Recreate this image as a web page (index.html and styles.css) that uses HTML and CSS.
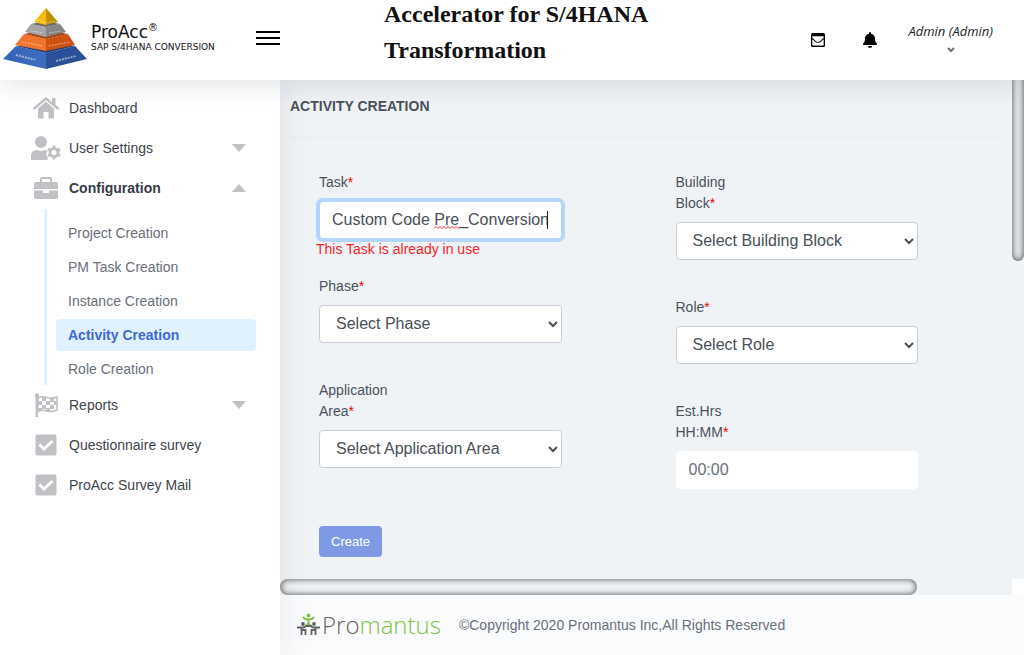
FILE: index.html
```html
<!DOCTYPE html>
<html lang="en">
<head>
<meta charset="utf-8">
<title>ProAcc - Activity Creation</title>
<link rel="stylesheet" href="styles.css">
</head>
<body>
<header class="topbar">
  <a class="brand" href="#">
    <svg class="brand-mark" width="86" height="64" viewBox="0 0 86 64" aria-hidden="true">
      <defs>
        <linearGradient id="blue" x1="0" x2="1"><stop offset="0" stop-color="#3563b5"/><stop offset="1" stop-color="#3e6dc0"/></linearGradient>
      </defs>
      <path d="M13 40L43 47V63L0 53z" fill="url(#blue)"/>
      <path d="M72 40L43 47V63L84 53z" fill="#2a5098"/>
      <path d="M13 40L43 34L72 40L43 47z" fill="#1f3e79"/>
      <path d="M21 28L43 33V45L12 39z" fill="#f0752a"/>
      <path d="M65 28L43 33V45L72 39z" fill="#cf5213"/>
      <path d="M21 28L43 24L65 28L43 33z" fill="#a64312"/>
      <path d="M28 18L43 21V31L22 26z" fill="#a5a5a5"/>
      <path d="M57 18L43 21V31L63 26z" fill="#858585"/>
      <path d="M28 18L43 15L57 18L43 21z" fill="#6c6c6c"/>
      <path d="M43 2V19L31 16z" fill="#f5bd0b"/>
      <path d="M43 2V19L55 16z" fill="#bd9005"/>
      <g stroke="#fff" stroke-opacity=".5" stroke-width="2" stroke-dasharray="2 1" fill="none">
        <path d="M13 49L33 54M53 55L73 50"/>
        <path d="M19 36L39 40M46 40L67 36" stroke-width="1"/>
        <path d="M28 25L40 27M46 27L58 25" stroke-width="1"/>
        <path d="M34 14L43 17L52 15" stroke-width="1"/>
      </g>
    </svg>
    <span class="brand-text">
      <span class="brand-name">ProAcc<sup>®</sup></span>
      <span class="brand-sub">SAP S/4HANA CONVERSION</span>
    </span>
  </a>
  <button class="icon-btn menu-btn" type="button" aria-label="Toggle menu">
    <svg width="24" height="16" viewBox="0 0 24 16"><path d="M0 1h24v2H0zM0 7h24v2H0zM0 13h24v2H0z"/></svg>
  </button>
  <h1 class="title">Accelerator for S/4HANA Transformation</h1>
  <div class="tools">
    <button class="icon-btn" type="button" aria-label="Messages">
      <svg width="14" height="14" viewBox="0 0 14 14"><rect width="14" height="14" rx="1.500"/><path d="M1.300 3.200h11.400v1.500L9 8.300Q7 9.700 5 8.300L1.300 4.700zM1.300 6.200L4.500 9Q7 10.700 9.500 9L12.700 6.200V12.500H1.300z" fill="#fff"/></svg>
    </button>
    <button class="icon-btn" type="button" aria-label="Notifications">
      <svg width="14" height="16" viewBox="0 0 448 512"><path d="M224 512c35 0 64-29 64-64H160c0 35 29 64 64 64zm215-150c-19-20-55-51-55-154 0-77-54-139-128-154V32a32 32 0 1 0-64 0v22C118 69 64 131 64 208c0 103-36 134-55 154-6 6-9 14-9 22 0 16 13 32 32 32h384c19 0 32-16 32-32 0-8-3-16-9-22z"/></svg>
    </button>
    <button class="user-btn" type="button">
      <span>Admin (Admin)</span>
      <svg width="8" height="6" viewBox="0 0 8 6"><path d="M1 1l3 3 3-3" fill="none" stroke="#69707a" stroke-width="2"/></svg>
    </button>
  </div>
</header>

<div class="shell">
  <nav class="sidebar">
    <a class="nav-item" href="#">
      <svg class="nav-icon" viewBox="0 0 28 28"><path d="M1.500 15L14 4.500 26.500 15" fill="none" stroke="#c0c1c4" stroke-width="2.400"/><path d="M20 4h3.500v8L20 9zM6 14.500l8-6.800 8 6.800V24.500h-5.500V18h-5v6.500H6z"/></svg>
      <span>Dashboard</span>
    </a>
    <a class="nav-item" href="#">
      <svg class="nav-icon wide" viewBox="0 0 30 28"><circle cx="10" cy="8" r="6"/><path d="M0 26v-3.500Q0 16 6 16q4 2 8 0 1.500 0 2.500 1l-1.500 3 2 4-1 2z"/><circle cx="23" cy="18.500" r="4" fill="none" stroke="#c0c1c4" stroke-width="3"/><path d="M23 11.500v2.500M23 23v2.500M17 15l2 1.200M27 20.800l2 1.200M17 22l2-1.200M27 16.200l2-1.200" stroke="#c0c1c4" stroke-width="2.800"/></svg>
      <span>User Settings</span>
      <svg class="caret" viewBox="0 0 14 8"><path d="M0 0h14L7 8z"/></svg>
    </a>
    <a class="nav-item open" href="#">
      <svg class="nav-icon" viewBox="0 0 28 28"><path d="M9 8V5q0-1 1-1h8q1 0 1 1v3" fill="none" stroke="#c0c1c4" stroke-width="2"/><path d="M4 8h20q2 0 2 2v5H2v-5q0-2 2-2zM2 16.500h9V19h6v-2.500h9V23q0 2-2 2H4q-2 0-2-2z"/></svg>
      <span>Configuration</span>
      <svg class="caret" viewBox="0 0 14 8"><path d="M0 8h14L7 0z"/></svg>
    </a>
    <div class="subnav">
      <a href="#">Project Creation</a>
      <a href="#">PM Task Creation</a>
      <a href="#">Instance Creation</a>
      <a class="active" href="#" aria-current="page">Activity Creation</a>
      <a href="#">Role Creation</a>
    </div>
    <a class="nav-item" href="#">
      <svg class="nav-icon" viewBox="0 0 28 28"><circle cx="5" cy="4.500" r="2.200"/><path d="M3.500 5H6v21H3.500z"/><path d="M6 7q4-2 8.500-.5T25 6v13q-5 2.500-10 1t-9 .5z" fill="none" stroke="#c0c1c4" stroke-width="1.500"/><path d="M10 6h4v4h-4zM18 7h4v4h-4zM6 10h4v4H6zM14 10h4v4h-4zM22 10h3v4h-3zM10 14h4v4h-4zM18 14h4v4h-4zM6 17h4v3H6zM14 17h4v4h-4z"/></svg>
      <span>Reports</span>
      <svg class="caret" viewBox="0 0 14 8"><path d="M0 0h14L7 8z"/></svg>
    </a>
    <a class="nav-item" href="#">
      <svg class="nav-icon" viewBox="0 0 28 28"><rect x="3.500" y="3.500" width="21" height="21" rx="2"/><path d="M7.500 13.500l4.500 4.500 8.500-8" fill="none" stroke="#fff" stroke-width="3"/></svg>
      <span>Questionnaire survey</span>
    </a>
    <a class="nav-item" href="#">
      <svg class="nav-icon" viewBox="0 0 28 28"><rect x="3.500" y="3.500" width="21" height="21" rx="2"/><path d="M7.500 13.500l4.500 4.500 8.500-8" fill="none" stroke="#fff" stroke-width="3"/></svg>
      <span>ProAcc Survey Mail</span>
    </a>
  </nav>

  <div class="main">
    <div class="pane">
      <main class="content">
        <h2 class="page-title">ACTIVITY CREATION</h2>
        <form class="form">
          <div class="column">
            <div class="field">
              <label for="task">Task<b>*</b></label>
              <div class="control-wrap">
                <input class="control focused" id="task" type="text" value="Custom Code Pre_Conversion" spellcheck="false" aria-describedby="task-error">
                <svg class="squiggle" width="26" height="3" viewBox="0 0 26 3"><path d="M0 2.500l2-2 2 2 2-2 2 2 2-2 2 2 2-2 2 2 2-2 2 2 2-2 2 2 2-2" fill="none" stroke="#f33"/></svg>
                <span class="text-caret"></span>
              </div>
              <p class="message" id="task-error">This Task is already in use</p>
            </div>
            <div class="field">
              <label for="phase">Phase<b>*</b></label>
              <select class="control" id="phase"><option>Select Phase</option></select>
              <p class="message"></p>
            </div>
            <div class="field">
              <label for="area"><span>Application</span> <span>Area<b>*</b></span></label>
              <select class="control" id="area"><option>Select Application Area</option></select>
              <p class="message"></p>
            </div>
            <button class="create-btn" type="button">Create</button>
          </div>
          <div class="column">
            <div class="field">
              <label for="block"><span>Building</span> <span>Block<b>*</b></span></label>
              <select class="control" id="block"><option>Select Building Block</option></select>
              <p class="message"></p>
            </div>
            <div class="field">
              <label for="role">Role<b>*</b></label>
              <select class="control" id="role"><option>Select Role</option></select>
              <p class="message"></p>
            </div>
            <div class="field">
              <label for="hours"><span>Est.Hrs</span> <span>HH:MM<b>*</b></span></label>
              <input class="control plain" id="hours" type="text" placeholder="00:00">
            </div>
          </div>
        </form>
      </main>
      <div class="track-y"><div class="thumb"></div></div>
      <div class="track-x"><div class="thumb"></div></div>
      <div class="corner"></div>
    </div>
    <footer class="footer">
      <a class="promantus" href="#">
        <svg width="23" height="24" viewBox="0 0 23 24" aria-hidden="true">
          <g fill="none" stroke="#80c342" stroke-width="1.800"><path d="M6 4q1.500 2.500 5.500 2.500T17 4M11.500 6v6M8 13q3.500-1 3.500-4 0 3 3.500 4"/></g>
          <circle cx="11.500" cy="2.500" r="1.900" fill="#80c342"/>
          <g fill="none" stroke="#636466" stroke-width="1.800"><path d="M0 14.500h6q2 0 3-1.500h5q1 1.500 3 1.500h6M4.500 15v7M8.500 22v-5h-4M18.500 15v7M14.500 22v-5h4"/></g>
          <circle cx="6" cy="11" r="1.900" fill="#636466"/><circle cx="17" cy="11" r="1.900" fill="#636466"/>
        </svg>
        <span>Pro<em>mantus</em></span>
      </a>
      <span>©Copyright 2020 Promantus Inc,All Rights Reserved</span>
    </footer>
  </div>
</div>
</body>
</html>
```
FILE: styles.css
```css
* { box-sizing: border-box; }

body {
  margin: 0;
  height: 100vh;
  display: flex;
  flex-direction: column;
  overflow: hidden;
  background: #fff;
  color: #4a515b;
  font: 14px/21px "Liberation Sans", Arial, sans-serif;
}

a { color: inherit; text-decoration: none; }
h1, h2, p { margin: 0; }
button { font-family: inherit; cursor: pointer; }

.topbar {
  position: relative;
  z-index: 3;
  flex: none;
  height: 80px;
  display: flex;
  align-items: center;
  background: #fff;
  box-shadow: 0 2px 28px rgba(33, 40, 50, .15);
}
.brand {
  width: 256px;
  padding: 0 0 4px 3px;
  display: flex;
  align-items: center;
  gap: 2px;
  color: #111;
  font-family: "DejaVu Sans", sans-serif;
}
.brand-text { display: flex; flex-direction: column; white-space: nowrap; }
.brand-name { font-size: 17px; line-height: 18px; }
.brand-name sup { font-size: 10px; line-height: 0; }
.brand-sub { font-size: 9px; line-height: 12px; }
.brand-mark { flex: none; }

.icon-btn { border: 0; padding: 0; background: none; line-height: 0; }
.menu-btn { margin-bottom: 4px; }
.title {
  flex: 0 1 320px;
  margin: 0 auto 16px 104px;
  color: #111;
  font: bold 24px/36px "Liberation Serif", "Times New Roman", serif;
}
.tools { display: flex; align-items: center; gap: 38px; padding-right: 31px; }
.user-btn {
  border: 0;
  margin-left: -7px;
  padding: 0 0 7px;
  background: none;
  display: flex;
  flex-direction: column;
  align-items: center;
  gap: 6px;
  color: #212529;
  font: italic 13px/20px "Open Sans", sans-serif;
}

.shell { flex: 1; min-height: 0; display: flex; }
.sidebar {
  position: relative;
  z-index: 2;
  flex: none;
  width: 280px;
  padding: 8px 24px 0 32px;
  background: #fff;
  color: #3d444d;
  box-shadow: 2px 0 28px rgba(33, 40, 50, .08);
}
.nav-item { height: 40px; display: flex; align-items: center; gap: 9px; }
.nav-item.open { font-weight: bold; color: #363d47; }
.nav-icon { width: 28px; height: 28px; fill: #c0c1c4; }
.nav-icon.wide { width: 30px; margin: 0 -1px; }
.caret { width: 14px; height: 8px; margin: 0 10px 0 auto; fill: #c0c1c4; }
.subnav {
  margin: 1px 0 0 12px;
  padding: 8px 0 0 9px;
  border-left: 3px solid #e0f2ff;
  display: flex;
  flex-direction: column;
  gap: 2px;
  color: #69707a;
}
.subnav a { padding: 6px 12px 5px; border-radius: 4px; }
.subnav .active { background: #e0f2ff; color: #4169d9; font-weight: bold; }

.main { flex: 1; min-width: 0; display: flex; flex-direction: column; }
.pane {
  flex: 1;
  min-height: 0;
  display: grid;
  grid-template: minmax(0, 1fr) 16px / minmax(0, 1fr) 12px;
  background: #eff3f6;
}
.content { padding: 16px 12px 0 10px; overflow: hidden; }
.page-title {
  padding-bottom: 20px;
  border-bottom: 1px solid #e8ecf0;
  color: #4a515b;
  font-size: 14px;
  line-height: 21px;
}
.form {
  display: grid;
  grid-template-columns: 1fr 1fr;
  gap: 114px;
  padding: 34px 82px 0 29px;
}
.field { margin-bottom: 16px; }
.field label { display: block; width: 33%; margin-bottom: 8px; }
.field label span { display: block; }
.field b { color: #f00; font-weight: normal; }
.control-wrap { position: relative; }
.control {
  display: block;
  width: 100%;
  height: 38px;
  padding: 6px 12px;
  border: 1px solid #c9cfd8;
  border-radius: 4px;
  background: #fff;
  color: #495057;
  font: 16px/24px "Liberation Sans", Arial, sans-serif;
}
select.control { padding: 5px 12px 7px; }
.control::placeholder { color: #69707a; opacity: 1; }
.control.focused { border-color: #b3d5fa; box-shadow: 0 0 0 3px #b3d5fa; outline: 0; }
.control.plain { border-color: #fff; }
.squiggle { position: absolute; left: 115px; top: 25px; }
.text-caret { position: absolute; left: 228px; top: 10px; width: 1px; height: 18px; background: #222; }
.message { min-height: 21px; margin-left: -3px; color: #fa1e28; }
.create-btn {
  display: block;
  margin-top: 37px;
  padding: 5px 12px;
  border: 0;
  border-radius: 4px;
  background: #7f9ae5;
  color: #fff;
  font-size: 13px;
  line-height: 21px;
}

.track-y .thumb, .track-x .thumb { background: #e6e7e9; box-shadow: inset 0 0 6px #444; }
.track-y .thumb { height: 190px; margin-top: -9px; border-radius: 8px; }
.track-x .thumb { width: 87%; height: 16px; border-radius: 8px; background: #eff2f5; }
.corner { background: #fff; }

.footer {
  flex: none;
  height: 60px;
  padding: 0 17px;
  display: flex;
  align-items: center;
  gap: 18px;
  background: #fafbfd;
  color: #69707a;
}
.promantus {
  display: flex;
  align-items: center;
  gap: 2px;
  color: #636466;
  font: 300 24px/32px "Open Sans", sans-serif;
}
.promantus em { color: #80c342; font-style: normal; }
```
